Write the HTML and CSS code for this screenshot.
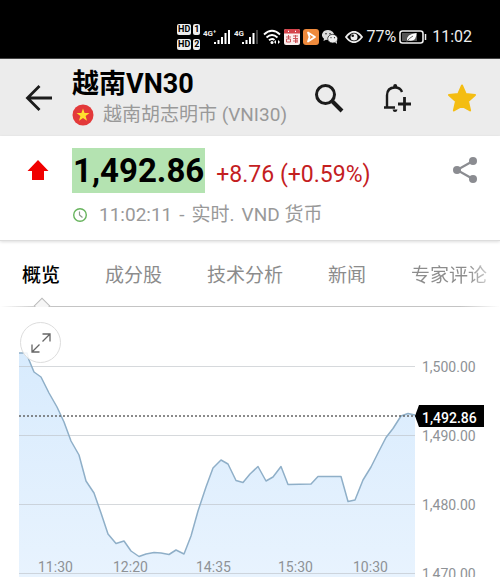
FILE: index.html
```html
<!DOCTYPE html>
<html lang="zh-CN">
<head>
<meta charset="utf-8">
<meta name="viewport" content="width=device-width, initial-scale=1">
<title>越南VN30</title>
<link rel="stylesheet" href="styles.css">
</head>
<body>
<div class="status">
  <div class="sims">
    <span class="sim"><b>HD</b><b>1</b></span>
    <span class="sim"><b>HD</b><b>2</b></span>
  </div>
  <svg class="signal" width="28" height="18" viewBox="0 0 28 18" aria-hidden="true">
    <text x="0" y="8">4G⁺</text>
    <path d="M12 16v-2M15.500 16v-4M19 16V9M22.500 16V5M26 16V2" stroke="#fff" stroke-width="2"/>
  </svg>
  <svg class="signal" width="26" height="18" viewBox="0 0 26 18" aria-hidden="true">
    <text x="0" y="8">4G</text>
    <path d="M9 16v-2M12.500 16v-4M16 16V9M19.500 16V5" stroke="#fff" stroke-width="2"/>
    <path d="M23 16V2" stroke="#444" stroke-width="2"/>
  </svg>
  <svg width="18" height="18" viewBox="0 0 18 18" fill="none" stroke="#fff" stroke-width="1.800" aria-hidden="true">
    <path d="M1 6.500Q9-1 17 6.500M3.500 9.500Q9 4.500 14.500 9.500M6 12.300Q9 9.800 11.500 12"/>
    <circle cx="9" cy="14.500" r="1.500" fill="#fff" stroke="none"/>
    <path d="M11 14l2-2v4zM17 14l-2-2v4z" fill="#fff" stroke="none"/>
  </svg>
  <svg width="16" height="16" viewBox="0 0 16 16" aria-hidden="true">
    <rect width="16" height="16" rx="2" fill="#fbeeee"/>
    <path d="M0 4.500V2q0-2 2-2h12q2 0 2 2v2.500z" fill="#d5434b"/>
    <path d="M4 2.300h1M11 2.300h1" stroke="#fff" stroke-width="1.200"/>
    <path d="M2 8h5M4.500 6v4M2.500 10h4v3h-4zM9 7h5M9 9.500h5M11.500 6v8M9 12h5M13 10v4" fill="none" stroke="#c9494f" stroke-width=".9"/>
  </svg>
  <svg width="16" height="16" viewBox="0 0 16 16" aria-hidden="true">
    <rect width="16" height="16" rx="3" fill="#ef8a3c"/>
    <path d="M5 3.500l7 4.500-7 4.500 1.500-4.500z" fill="none" stroke="#fff" stroke-width="1.800" stroke-linejoin="round"/>
  </svg>
  <svg width="16" height="14" viewBox="0 0 16 14" aria-hidden="true">
    <path d="M6 0a6 5 0 0 0-4 8.700L1.500 11l2.500-1.300A6 5 0 1 0 6 0z" fill="#ddd"/>
    <ellipse cx="10.700" cy="8.700" rx="5" ry="4.300" fill="#eee" stroke="#111" stroke-width=".7"/>
    <path d="M13 12l2 2-.3-3z" fill="#eee"/>
    <g fill="#222"><circle cx="4" cy="3.700" r=".8"/><circle cx="8" cy="3.700" r=".8"/><circle cx="9" cy="7.700" r=".6"/><circle cx="12.500" cy="7.700" r=".6"/></g>
  </svg>
  <svg class="eye" width="18" height="12" viewBox="0 0 18 12" fill="none" stroke="#eee" stroke-width="1.800" aria-hidden="true">
    <path d="M1 6Q9-4.500 17 6Q9 16.500 1 6z"/><circle cx="9" cy="6" r="3.500" fill="#eee" stroke="none"/><circle cx="7.700" cy="4.700" r="1.300" fill="#111" stroke="none"/>
  </svg>
  <span class="reading">77%</span>
  <svg width="28" height="14" viewBox="0 0 28 14" aria-hidden="true">
    <rect x="1" y="1" width="23" height="12" rx="2.500" fill="none" stroke="#eee" stroke-width="1.600"/>
    <rect x="3" y="3" width="15" height="8" fill="#555"/>
    <path d="M8 11q-1-7 9.500-8q0 9-7.500 7.500" fill="#fff"/><path d="M7.500 12Q10 8 14 6" stroke="#555" stroke-width=".9" fill="none"/>
    <path d="M26.500 4v6" stroke="#eee" stroke-width="1.500"/>
  </svg>
  <time class="reading clock">11:02</time>
</div>

<header class="appbar">
  <button class="icon" aria-label="返回">
    <svg width="28" height="28" viewBox="0 0 28 28" fill="none" stroke="#1b1b1b" stroke-width="2.800"><path d="M27 14H3M14.500 2L2.500 14l12 12"/></svg>
  </button>
  <div class="names">
    <h1>越南VN30</h1>
    <p class="market">
      <svg width="22" height="22" viewBox="0 0 22 22" aria-hidden="true"><circle cx="11" cy="11" r="10.500" fill="#e3393a"/><path d="M11 4.500l1.600 4.600h4.900l-3.900 3 1.400 4.700-4-2.800-4 2.800 1.400-4.700-3.900-3h4.900z" fill="#ffe12e"/></svg>
      <span>越南胡志明市 (VNI30)</span>
    </p>
  </div>
  <div class="actions">
    <button class="icon" aria-label="搜索">
      <svg width="30" height="30" viewBox="1 0 30 30" fill="none" stroke="#1b1b1b"><circle cx="11.500" cy="11.500" r="9" stroke-width="3"/><path d="M18.500 18.500l9.500 9.500" stroke-width="4"/></svg>
    </button>
    <button class="icon" aria-label="添加提醒">
      <svg width="30" height="30" viewBox="-2 0 30 30" fill="none" stroke="#1b1b1b" stroke-width="2.400"><path d="M1 24.500h11M4 24V12.500C4 7.500 7 4.500 12 4.500c3.500 0 6 1.500 7 4.500"/><path d="M10.200 4.500V3q0-2 2-2t2 2v1.500z" fill="#1b1b1b" stroke="none"/><path d="M9.500 26.500h5q-.5 2.500-2.500 2.500t-2.500-2.500z" fill="#1b1b1b" stroke="none"/><path d="M15 21h13M21.500 14v14" stroke-width="2.800"/></svg>
    </button>
    <button class="icon" aria-label="收藏">
      <svg width="30" height="30" viewBox="0 0 30 30"><path d="M15 2.500l3.700 8.500 9.300.9-7 6.400 2.100 9.200L15 22.800l-8.100 4.700L9 18.300l-7-6.400 9.300-.9z" fill="#f4bd13" stroke="#f4bd13" stroke-width="2" stroke-linejoin="round"/></svg>
    </button>
  </div>
</header>

<section class="quote">
  <svg class="up" width="22" height="20" viewBox="0 0 22 20" aria-hidden="true"><path d="M11 0l10.500 11H17v9H5v-9H.5z" fill="#f00000"/></svg>
  <div class="figures">
    <p class="values"><strong>1,492.86</strong><span>+8.76 (+0.59%)</span></p>
    <p class="session">
      <svg width="16" height="16" viewBox="0 0 16 16" fill="none" aria-hidden="true"><circle cx="8" cy="8" r="6.300" stroke="#67b45d" stroke-width="1.400"/><path d="M7.500 4.500V8l3 2.500" stroke="#8a9a8a" stroke-width="1.200"/></svg>
      <span class="parts"><time>11:02:11</time><span>-</span><span>实时.</span><span>VND 货币</span></span>
    </p>
  </div>
  <button class="icon share" aria-label="分享">
    <svg width="26" height="28" viewBox="0 0 26 28" fill="#8b8c91"><path d="M21 5L5 14l16 9" fill="none" stroke="#8b8c91" stroke-width="2.200"/><circle cx="5" cy="14" r="4"/><circle cx="21" cy="5" r="4"/><circle cx="21" cy="23" r="4"/></svg>
  </button>
</section>

<nav class="tabs">
  <a class="active" href="#overview">概览</a>
  <a href="#components">成分股</a>
  <a href="#technical">技术分析</a>
  <a href="#news">新闻</a>
  <a href="#comments">专家评论</a>
</nav>

<main class="chart" id="overview">
  <svg class="plot" viewBox="0 307 500 270" role="img" aria-label="越南VN30 走势图">
    <defs><linearGradient id="fill" x1="0" y1="0" x2="0" y2="1"><stop offset="0" stop-color="#d8ebfd"/><stop offset="1" stop-color="#e8f3fe"/></linearGradient></defs>
    <path d="M19 353H27L29 360 34 372 41 377 49 393 57 407 64 422 71 441 79 455 86 481 94 493 101 513 108 534 116 543.500 124 541 131 551 139 556.500 146 554 154 552.500 161 553 169 554.500 176 550 184 554 191 536 198 511 206 487 213 468 221 460 228 464 236 480.500 243 482.500 250 474 258 466.500 266 481 273 477 281 466.500 288 484.500 311 484 318 476.500H341L348 501.500 355 500 363 480 371 467 378 453 386 437.500 393 428.500 401 416 408 413.500 415 415V577H19z" fill="url(#fill)"/>
    <path class="grid" d="M19 366.500H415M19 435.500H415M19 504.500H415M19 573.500H415"/>
    <path class="line" d="M19 353H27L29 360 34 372 41 377 49 393 57 407 64 422 71 441 79 455 86 481 94 493 101 513 108 534 116 543.500 124 541 131 551 139 556.500 146 554 154 552.500 161 553 169 554.500 176 550 184 554 191 536 198 511 206 487 213 468 221 460 228 464 236 480.500 243 482.500 250 474 258 466.500 266 481 273 477 281 466.500 288 484.500 311 484 318 476.500H341L348 501.500 355 500 363 480 371 467 378 453 386 437.500 393 428.500 401 416 408 413.500 415 415"/>
    <path class="last" d="M19 416H416"/>
    <g class="label">
      <text x="422" y="372">1,500.00</text>
      <text x="422" y="441">1,490.00</text>
      <text x="422" y="510">1,480.00</text>
      <text x="422" y="579">1,470.00</text>
      <text x="38" y="572">11:30</text>
      <text x="113" y="572">12:20</text>
      <text x="196" y="572">14:35</text>
      <text x="278" y="572">15:30</text>
      <text x="353" y="572">10:30</text>
    </g>
    <path d="M415 416l4-11h65v22h-65z"/>
    <text class="tag" x="422" y="423">1,492.86</text>
  </svg>
  <button class="expand" aria-label="全屏">
    <svg width="20" height="20" viewBox="0 0 20 20" fill="none" stroke="#666" stroke-width="1.300"><path d="M11.500 8.500L19 1M11.500 1H19v7.500M8.500 11.500L1 19M1 11.500V19h7.500"/></svg>
  </button>
</main>
</body>
</html>
```
FILE: styles.css
```css
* { box-sizing: border-box; }
body {
  margin: 0;
  background: #fff;
  color: #000;
  font-family: Roboto, "Noto Sans CJK SC", sans-serif;
}
h1, p { margin: 0; }
svg { display: block; flex: none; }
button { border: 0; padding: 0; background: none; }

.status {
  display: flex;
  align-items: center;
  justify-content: flex-end;
  gap: 3px;
  height: 59px;
  padding: 16px 28px 0 0;
  background: #000;
  border-bottom: 1px solid #444;
  color: #eee;
}
.sims { display: grid; gap: 4px; }
.sim { display: flex; gap: 2px; }
.sim b {
  padding: 0 1px;
  border-radius: 2px;
  background: #eee;
  color: #000;
  font-size: 9px;
  line-height: 11px;
}
.signal text { fill: #eee; font-size: 8px; font-weight: 700; }
.eye { margin-left: 4px; }
.reading { font-size: 16px; line-height: 24px; }
.clock { margin-left: 2px; }

.icon { display: grid; place-items: center; }
.appbar {
  display: flex;
  align-items: center;
  height: 77px;
  padding: 0 23px 0 25px;
  background: #ececec;
}
.names { flex: 1; margin-left: 19px; }
h1 { font-size: 27px; line-height: 34px; font-weight: 700; white-space: nowrap; }
.market {
  display: flex;
  align-items: center;
  gap: 9px;
  color: #999;
  font-size: 19px;
  line-height: 28px;
  white-space: nowrap;
}
.actions { display: flex; gap: 36px; }

.quote {
  display: flex;
  align-items: flex-start;
  padding: 12px 22px 11px 27px;
  border-bottom: 1px solid #ddd;
  box-shadow: 0 1px 3px #0002;
}
.up { margin-top: 12px; }
.figures { flex: 1; margin-left: 23px; }
.values { display: flex; align-items: baseline; gap: 11px; white-space: nowrap; }
.values strong {
  padding: 0 1px;
  background: #b4e3b1;
  font-size: 33px;
  line-height: 45px;
}
.values span { color: #c4201f; font-size: 23px; }
.session {
  display: flex;
  align-items: center;
  gap: 11px;
  margin-top: 8px;
  color: #999;
  font-size: 19px;
  line-height: 28px;
  white-space: nowrap;
}
.parts { display: flex; gap: 7px; }
.share { margin-top: 8px; }

.tabs {
  position: relative;
  display: flex;
  gap: 45px;
  height: 66px;
  padding: 0 14px 0 22px;
  overflow: hidden;
  background: linear-gradient(90deg, transparent, #c4c4c4 8%, #c4c4c4 92%, transparent) bottom / 100% 1px no-repeat;
}
.tabs a {
  flex: none;
  padding-top: 4px;
  position: relative;
  color: #8c8c8c;
  font-size: 19px;
  line-height: 62px;
  text-decoration: none;
}
.tabs .active { color: #000; font-weight: 500; }
.tabs .active::after {
  content: "";
  position: absolute;
  left: 50%;
  bottom: -5px;
  width: 10px;
  height: 10px;
  margin-left: -5px;
  border: 1px solid #bbb;
  background: #f6f6f6;
  transform: rotate(45deg);
}
.tabs a:last-child {
  background: linear-gradient(90deg, #8c8c8c 75%, #ccc);
  background-clip: text;
  color: transparent;
}

.chart { position: relative; }
.plot { width: 100%; }
.grid { fill: none; stroke: #bbbfc4; stroke-opacity: .6; }
.line { fill: none; stroke: #8fafc8; stroke-width: 1.500; stroke-linejoin: round; }
.last { fill: none; stroke: #666; stroke-width: 1.500; stroke-dasharray: 2 2; }
.label { fill: #8e9296; font-size: 14px; }
.tag { fill: #fff; font-size: 14px; font-weight: 500; }
.expand {
  position: absolute;
  left: 4%;
  top: 15px;
  display: grid;
  place-items: center;
  width: 41px;
  height: 41px;
  border: 1px solid #ddd;
  border-radius: 50%;
  background: #fffd;
}
```
